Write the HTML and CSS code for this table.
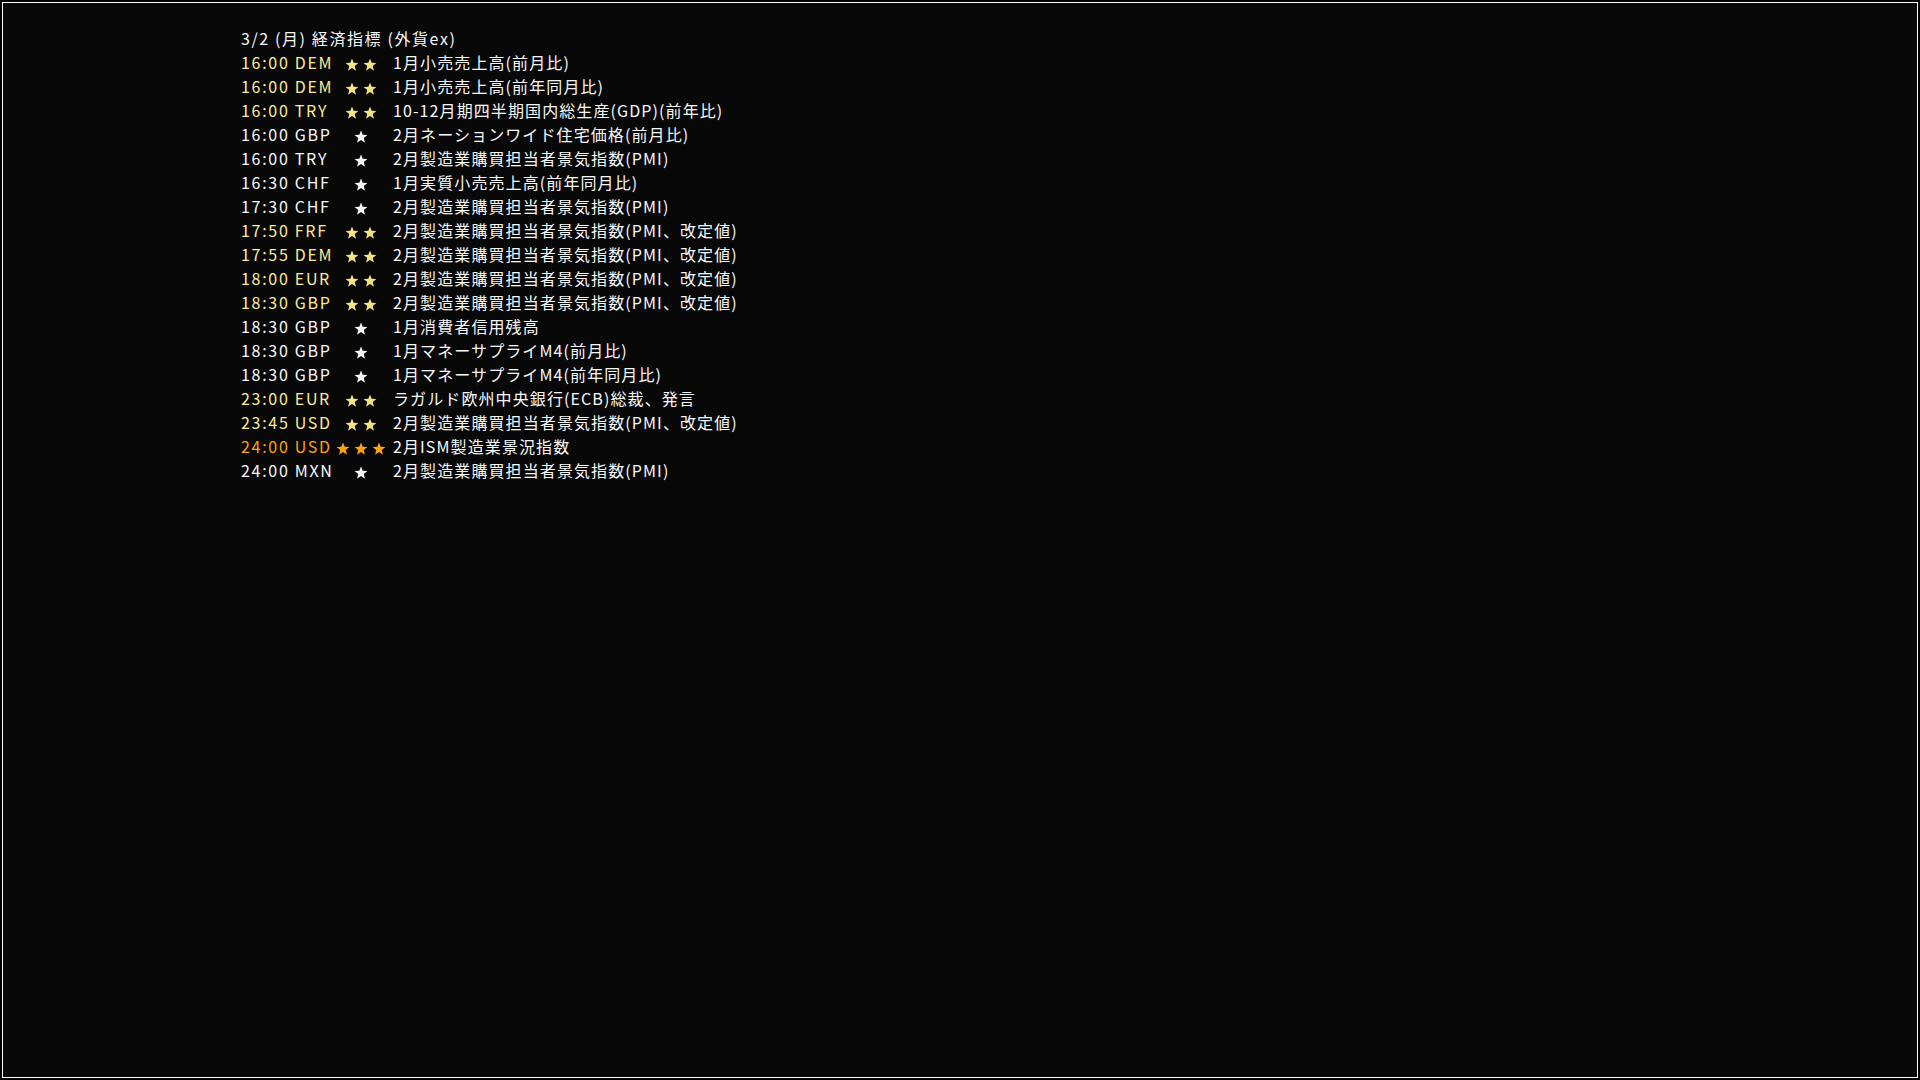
FILE: index.html
```html
<!DOCTYPE html>
<html lang="ja">
<head>
<meta charset="utf-8">
<title>経済指標</title>
<link rel="stylesheet" href="styles.css">
</head>
<body>
<svg width="0" height="0" class="defs">
  <defs>
    <symbol id="star" viewBox="0 0 24 22">
      <polygon points="12,0.5 14.9,7.9 23,8.3 16.7,13.4 18.8,21.5 12,16.9 5.2,21.5 7.3,13.4 1,8.3 9.1,7.9"/>
    </symbol>
  </defs>
</svg>
<div class="frame">
  <div class="list">
    <div class="title">3/2 (月) 経済指標 (外貨ex)</div>

    <div class="row mid"><span class="time">16:00 DEM</span><span class="stars"><svg class="st"><use href="#star"/></svg><svg class="st"><use href="#star"/></svg></span><span class="desc">1月小売売上高(前月比)</span></div>
    <div class="row mid"><span class="time">16:00 DEM</span><span class="stars"><svg class="st"><use href="#star"/></svg><svg class="st"><use href="#star"/></svg></span><span class="desc">1月小売売上高(前年同月比)</span></div>
    <div class="row mid"><span class="time">16:00 TRY</span><span class="stars"><svg class="st"><use href="#star"/></svg><svg class="st"><use href="#star"/></svg></span><span class="desc">10-12月期四半期国内総生産(GDP)(前年比)</span></div>
    <div class="row low"><span class="time">16:00 GBP</span><span class="stars"><svg class="st"><use href="#star"/></svg></span><span class="desc">2月ネーションワイド住宅価格(前月比)</span></div>
    <div class="row low"><span class="time">16:00 TRY</span><span class="stars"><svg class="st"><use href="#star"/></svg></span><span class="desc">2月製造業購買担当者景気指数(PMI)</span></div>
    <div class="row low"><span class="time">16:30 CHF</span><span class="stars"><svg class="st"><use href="#star"/></svg></span><span class="desc">1月実質小売売上高(前年同月比)</span></div>
    <div class="row low"><span class="time">17:30 CHF</span><span class="stars"><svg class="st"><use href="#star"/></svg></span><span class="desc">2月製造業購買担当者景気指数(PMI)</span></div>
    <div class="row mid"><span class="time">17:50 FRF</span><span class="stars"><svg class="st"><use href="#star"/></svg><svg class="st"><use href="#star"/></svg></span><span class="desc">2月製造業購買担当者景気指数(PMI、改定値)</span></div>
    <div class="row mid"><span class="time">17:55 DEM</span><span class="stars"><svg class="st"><use href="#star"/></svg><svg class="st"><use href="#star"/></svg></span><span class="desc">2月製造業購買担当者景気指数(PMI、改定値)</span></div>
    <div class="row mid"><span class="time">18:00 EUR</span><span class="stars"><svg class="st"><use href="#star"/></svg><svg class="st"><use href="#star"/></svg></span><span class="desc">2月製造業購買担当者景気指数(PMI、改定値)</span></div>
    <div class="row mid"><span class="time">18:30 GBP</span><span class="stars"><svg class="st"><use href="#star"/></svg><svg class="st"><use href="#star"/></svg></span><span class="desc">2月製造業購買担当者景気指数(PMI、改定値)</span></div>
    <div class="row low"><span class="time">18:30 GBP</span><span class="stars"><svg class="st"><use href="#star"/></svg></span><span class="desc">1月消費者信用残高</span></div>
    <div class="row low"><span class="time">18:30 GBP</span><span class="stars"><svg class="st"><use href="#star"/></svg></span><span class="desc">1月マネーサプライM4(前月比)</span></div>
    <div class="row low"><span class="time">18:30 GBP</span><span class="stars"><svg class="st"><use href="#star"/></svg></span><span class="desc">1月マネーサプライM4(前年同月比)</span></div>
    <div class="row mid"><span class="time">23:00 EUR</span><span class="stars"><svg class="st"><use href="#star"/></svg><svg class="st"><use href="#star"/></svg></span><span class="desc">ラガルド欧州中央銀行(ECB)総裁、発言</span></div>
    <div class="row mid"><span class="time">23:45 USD</span><span class="stars"><svg class="st"><use href="#star"/></svg><svg class="st"><use href="#star"/></svg></span><span class="desc">2月製造業購買担当者景気指数(PMI、改定値)</span></div>
    <div class="row high"><span class="time">24:00 USD</span><span class="stars"><svg class="st"><use href="#star"/></svg><svg class="st"><use href="#star"/></svg><svg class="st"><use href="#star"/></svg></span><span class="desc">2月ISM製造業景況指数</span></div>
    <div class="row low"><span class="time">24:00 MXN</span><span class="stars"><svg class="st"><use href="#star"/></svg></span><span class="desc">2月製造業購買担当者景気指数(PMI)</span></div>
  </div>
</div>
</body>
</html>
```
FILE: styles.css
```css
html, body {
  margin: 0;
  padding: 0;
  background: #000;
}

.defs {
  position: absolute;
  width: 0;
  height: 0;
}

.frame {
  box-sizing: border-box;
  margin: 2px 0 0 2px;
  width: 1916px;
  height: 1076px;
  border: 1px solid #ffffff;
  background: #080808;
  padding: 23px 0 0 238px;
  font-family: "Noto Sans CJK JP", "Noto Sans", sans-serif;
  font-weight: 400;
  font-size: 16px;
  line-height: 24px;
  letter-spacing: 1px;
  color: #f8f8f8;
}

.list {
  display: flex;
  flex-direction: column;
}

.title {
  height: 24px;
  white-space: nowrap;
  letter-spacing: 1.6px;
}

.row {
  display: grid;
  grid-template-columns: 93px 54px auto;
  height: 24px;
  white-space: nowrap;
}

.time {
  display: block;
  letter-spacing: 1.7px;
}

.stars {
  display: flex;
  justify-content: center;
  align-items: flex-start;
  gap: 4px;
  padding-top: 8px;
}

.st {
  width: 14px;
  height: 13px;
  display: block;
  fill: currentColor;
}

.desc {
  padding-left: 5px;
  letter-spacing: 1.1px;
  color: #f8f8f8;
}

.mid .time {
  color: #ffea94;
}

.mid .stars {
  color: #f2e283;
}

.low .time,
.low .stars {
  color: #f8f8f8;
}

.high .time,
.high .stars {
  color: #ffa20c;
}
```
